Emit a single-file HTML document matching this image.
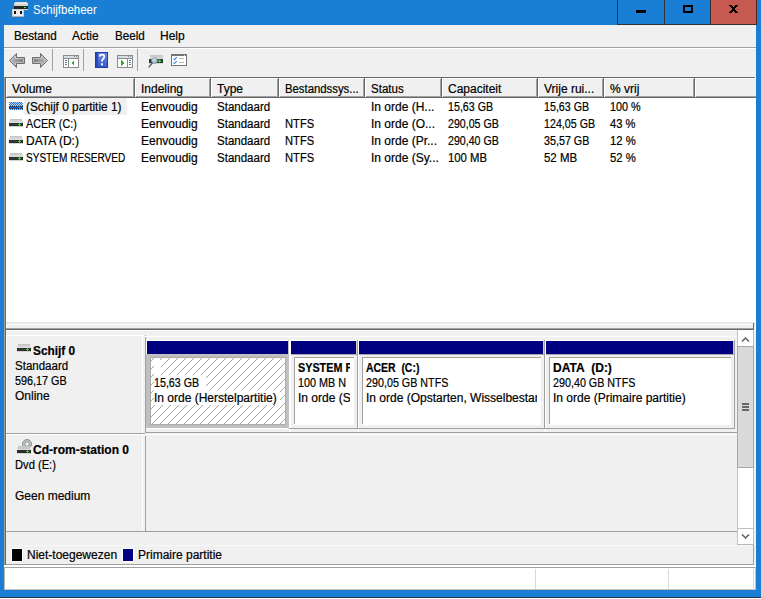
<!DOCTYPE html>
<html><head><meta charset="utf-8">
<style>
*{margin:0;padding:0;box-sizing:border-box}
html,body{width:761px;height:599px;overflow:hidden;background:#fff}
body{position:relative;font-family:"Liberation Sans",sans-serif;font-size:12px;color:#000;-webkit-text-stroke-width:0.2px}
.a{position:absolute}
.t{position:absolute;white-space:nowrap;line-height:15px}
.b{font-weight:bold}
svg{position:absolute;shape-rendering:crispEdges}
svg.s{shape-rendering:auto}
</style></head><body>
<div class="a" style="left:0px;top:0px;width:761px;height:597px;background:#1a7fd4;"></div>
<div class="a" style="left:0px;top:597px;width:761px;height:1px;background:#2a3440;"></div>
<svg style="left:12px;top:2px" width="17" height="16" viewBox="0 0 17 16">
<rect x="3" y="0" width="12" height="1" fill="#e0dcd8"/>
<rect x="2" y="1" width="14" height="3" fill="#d4d4d4"/>
<rect x="2" y="1" width="14" height="1" fill="#e8e8e8"/>
<rect x="2" y="4" width="14" height="3" fill="#262626"/>
<rect x="12" y="5" width="2" height="1" fill="#33ee33"/>
<rect x="2" y="7" width="14" height="1" fill="#d8d4d0"/>
<rect x="0" y="7" width="12" height="8" fill="#d0d0d0"/>
<rect x="1" y="8" width="10" height="6" fill="#ececec"/>
<rect x="2" y="9" width="2" height="3" fill="#151515"/>
<rect x="8" y="9" width="2" height="3" fill="#151515"/>
<rect x="0" y="14" width="12" height="1" fill="#b8aca0"/>
</svg>
<div class="t" style="left:33px;top:3px;transform:scaleX(0.955);transform-origin:0 0;color:#fff;-webkit-text-stroke-width:0">Schijfbeheer</div>
<div class="a" style="left:617px;top:0px;width:1px;height:25px;background:#333;"></div>
<div class="a" style="left:664px;top:0px;width:1px;height:25px;background:#333;"></div>
<div class="a" style="left:710px;top:0px;width:1px;height:25px;background:#333;"></div>
<div class="a" style="left:617px;top:24px;width:140px;height:1px;background:#333;"></div>
<div class="a" style="left:711px;top:0px;width:45px;height:24px;background:#c75a50;"></div>
<div class="a" style="left:756px;top:0px;width:1px;height:25px;background:#4a2a28;"></div>
<div class="a" style="left:636px;top:10px;width:10px;height:3px;background:#000;"></div>
<div class="a" style="left:683px;top:5px;width:10px;height:8px;border:2px solid #000"></div>
<svg style="left:729px;top:5px" width="9" height="8" viewBox="0 0 9 8"><rect x="0" y="0" width="3" height="1" fill="#000"/><rect x="6" y="0" width="3" height="1" fill="#000"/><rect x="1" y="1" width="3" height="1" fill="#000"/><rect x="5" y="1" width="3" height="1" fill="#000"/><rect x="2" y="2" width="5" height="1" fill="#000"/><rect x="3" y="3" width="3" height="1" fill="#000"/><rect x="3" y="4" width="3" height="1" fill="#000"/><rect x="2" y="5" width="5" height="1" fill="#000"/><rect x="1" y="6" width="3" height="1" fill="#000"/><rect x="5" y="6" width="3" height="1" fill="#000"/><rect x="0" y="7" width="3" height="1" fill="#000"/><rect x="6" y="7" width="3" height="1" fill="#000"/></svg>
<div class="a" style="left:4px;top:25px;width:752px;height:565px;background:#f0f0f0;"></div>
<div class="t" style="left:14px;top:29px;transform:scaleX(0.97);transform-origin:0 0;">Bestand</div>
<div class="t" style="left:72px;top:29px;">Actie</div>
<div class="t" style="left:115px;top:29px;transform:scaleX(0.97);transform-origin:0 0;">Beeld</div>
<div class="t" style="left:160px;top:29px;">Help</div>
<div class="a" style="left:4px;top:47px;width:752px;height:1px;background:#a0a0a0;"></div>
<div class="a" style="left:4px;top:48px;width:752px;height:1px;background:#fff;"></div>
<div class="a" style="left:52px;top:49px;width:1px;height:22px;background:#a0a0a0;"></div>
<div class="a" style="left:83px;top:49px;width:1px;height:22px;background:#a0a0a0;"></div>
<div class="a" style="left:137px;top:49px;width:1px;height:22px;background:#a0a0a0;"></div>
<svg class="s" style="left:8px;top:52px" width="18" height="17" viewBox="0 0 18 17"><defs><linearGradient id="ga" x1="0" y1="0" x2="1" y2="0.3"><stop offset="0" stop-color="#c4c4c4"/><stop offset="1" stop-color="#808080"/></linearGradient><linearGradient id="ga2" x1="1" y1="0" x2="0" y2="0.3"><stop offset="0" stop-color="#c4c4c4"/><stop offset="1" stop-color="#808080"/></linearGradient></defs><path d="M1.5 8.5 L8.5 1.5 L8.5 5.5 L16.5 5.5 L16.5 11.5 L8.5 11.5 L8.5 15.5 Z" fill="url(#ga)" stroke="#6e6e6e" stroke-width="1"/><path d="M3 8.5 L7.5 4 L7.5 6.5 L15.5 6.5 L15.5 10.5 L7.5 10.5 L7.5 13 Z" fill="none" stroke="#e4e4e4" stroke-width="0.7" stroke-opacity="0.8"/></svg>
<svg class="s" style="left:31px;top:52px" width="18" height="17" viewBox="0 0 18 17"><path d="M16.5 8.5 L9.5 1.5 L9.5 5.5 L1.5 5.5 L1.5 11.5 L9.5 11.5 L9.5 15.5 Z" fill="url(#ga2)" stroke="#6e6e6e" stroke-width="1"/><path d="M15 8.5 L10.5 4 L10.5 6.5 L2.5 6.5 L2.5 10.5 L10.5 10.5 L10.5 13 Z" fill="none" stroke="#e4e4e4" stroke-width="0.7" stroke-opacity="0.8"/></svg>
<svg style="left:63px;top:55px" width="16" height="13" viewBox="0 0 16 13"><rect x="0" y="0" width="16" height="13" fill="#8a8a8a"/><rect x="1" y="1" width="14" height="11" fill="#fff"/><rect x="1" y="1" width="14" height="2" fill="#d8dde5"/><rect x="11" y="1" width="1" height="1" fill="#8a8a8a"/><rect x="13" y="1" width="1" height="1" fill="#8a8a8a"/><rect x="0" y="3" width="16" height="1" fill="#8a8a8a"/><rect x="5" y="3" width="1" height="10" fill="#8a8a8a"/><rect x="2" y="5" width="2" height="1" fill="#4a7fc0"/><rect x="2" y="7" width="2" height="1" fill="#4a7fc0"/><rect x="2" y="9" width="2" height="1" fill="#4a7fc0"/><path d="M8 8 L11 5 L11 11 Z" fill="#3aaa2a"/></svg>
<svg class="s" style="left:95px;top:52px" width="13" height="16" viewBox="0 0 13 16"><defs><linearGradient id="gh" x1="0" y1="0" x2="0" y2="1"><stop offset="0" stop-color="#6a8ae8"/><stop offset="1" stop-color="#3a58c8"/></linearGradient></defs><rect x="0" y="0" width="13" height="16" fill="#1e3aa8"/><rect x="3" y="1" width="9" height="14" fill="url(#gh)"/><rect x="1" y="1" width="2" height="14" fill="#2a4ab8"/><path d="M4.6 4.6 Q4.8 2.6 7 2.6 Q9.3 2.6 9.3 4.6 Q9.3 6 8 7 Q7 7.8 7 9.6" fill="none" stroke="#fff" stroke-width="1.7"/><rect x="6" y="11.3" width="2" height="2" fill="#fff"/></svg>
<svg style="left:117px;top:55px" width="16" height="13" viewBox="0 0 16 13"><rect x="0" y="0" width="16" height="13" fill="#8a8a8a"/><rect x="1" y="1" width="14" height="11" fill="#fff"/><rect x="1" y="1" width="14" height="2" fill="#d8dde5"/><rect x="11" y="1" width="1" height="1" fill="#8a8a8a"/><rect x="13" y="1" width="1" height="1" fill="#8a8a8a"/><rect x="0" y="3" width="16" height="1" fill="#8a8a8a"/><rect x="10" y="3" width="1" height="10" fill="#8a8a8a"/><rect x="12" y="5" width="2" height="1" fill="#4a7fc0"/><rect x="12" y="7" width="2" height="1" fill="#4a7fc0"/><rect x="12" y="9" width="2" height="1" fill="#4a7fc0"/><path d="M4 5 L7 8 L4 11 Z" fill="#3aaa2a"/></svg>
<svg class="s" style="left:147px;top:53px" width="17" height="16" viewBox="0 0 17 16"><defs><linearGradient id="gd" x1="0" y1="0" x2="0" y2="1"><stop offset="0" stop-color="#c4c4c4"/><stop offset="1" stop-color="#dcdcdc"/></linearGradient><radialGradient id="gl" cx="0.4" cy="0.35" r="0.75"><stop offset="0" stop-color="#e0eaf0"/><stop offset="1" stop-color="#7a98b0"/></radialGradient></defs><rect x="3" y="2" width="13" height="4" fill="url(#gd)"/><rect x="2" y="6" width="14" height="4" fill="#343434"/><rect x="12" y="6.5" width="1.2" height="3" fill="#22ee22"/><rect x="11" y="7.4" width="3.2" height="1.2" fill="#22ee22"/><rect x="2" y="10" width="14" height="1" fill="#d4d4d4"/><line x1="5.6" y1="9.8" x2="1.6" y2="14.4" stroke="#505860" stroke-width="1.3"/><circle cx="7.5" cy="7.6" r="2.9" fill="url(#gl)" stroke="#8aa0b0" stroke-width="0.8"/></svg>
<svg style="left:171px;top:54px" width="16" height="12" viewBox="0 0 16 12"><rect x="0" y="0" width="16" height="12" fill="#747474"/><rect x="1" y="2" width="14" height="9" fill="#fff"/><rect x="13" y="1" width="1" height="1" fill="#d0d0d0"/></svg>
<svg class="s" style="left:171px;top:54px" width="16" height="12" viewBox="0 0 16 12"><path d="M2.5 4.6 L3.6 5.7 L5.8 3.2" stroke="#3a8ae0" stroke-width="1.1" fill="none"/><path d="M2.5 8.4 L3.6 9.5 L5.8 7" stroke="#3a8ae0" stroke-width="1.1" fill="none"/><rect x="8" y="4" width="5" height="1" fill="#b8b8b8"/><rect x="8" y="8" width="5" height="1" fill="#b8b8b8"/></svg>
<div class="a" style="left:4px;top:77px;width:1px;height:253px;background:#a8a098;"></div>
<div class="a" style="left:5px;top:77px;width:1px;height:488px;background:#696969;"></div>
<div class="a" style="left:5px;top:77px;width:750px;height:1px;background:#696969;"></div>
<div class="a" style="left:6px;top:78px;width:749px;height:244px;background:#fff;"></div>
<div class="a" style="left:755px;top:77px;width:1px;height:253px;background:#fff;"></div>
<div class="a" style="left:6px;top:78px;width:129px;height:20px;background:#f0f0f0;"></div>
<div class="a" style="left:6px;top:78px;width:129px;height:1px;background:#fff;"></div>
<div class="a" style="left:6px;top:78px;width:1px;height:20px;background:#fff;"></div>
<div class="a" style="left:6px;top:97px;width:129px;height:1px;background:#696969;"></div>
<div class="a" style="left:7px;top:96px;width:128px;height:1px;background:#a0a0a0;"></div>
<div class="a" style="left:134px;top:78px;width:1px;height:20px;background:#696969;"></div>
<div class="a" style="left:133px;top:79px;width:1px;height:18px;background:#a0a0a0;"></div>
<div class="t" style="left:12px;top:82px;transform:scaleX(1);transform-origin:0 0;">Volume</div>
<div class="a" style="left:135px;top:78px;width:76px;height:20px;background:#f0f0f0;"></div>
<div class="a" style="left:135px;top:78px;width:76px;height:1px;background:#fff;"></div>
<div class="a" style="left:135px;top:78px;width:1px;height:20px;background:#fff;"></div>
<div class="a" style="left:135px;top:97px;width:76px;height:1px;background:#696969;"></div>
<div class="a" style="left:136px;top:96px;width:75px;height:1px;background:#a0a0a0;"></div>
<div class="a" style="left:210px;top:78px;width:1px;height:20px;background:#696969;"></div>
<div class="a" style="left:209px;top:79px;width:1px;height:18px;background:#a0a0a0;"></div>
<div class="t" style="left:141px;top:82px;transform:scaleX(1);transform-origin:0 0;">Indeling</div>
<div class="a" style="left:211px;top:78px;width:68px;height:20px;background:#f0f0f0;"></div>
<div class="a" style="left:211px;top:78px;width:68px;height:1px;background:#fff;"></div>
<div class="a" style="left:211px;top:78px;width:1px;height:20px;background:#fff;"></div>
<div class="a" style="left:211px;top:97px;width:68px;height:1px;background:#696969;"></div>
<div class="a" style="left:212px;top:96px;width:67px;height:1px;background:#a0a0a0;"></div>
<div class="a" style="left:278px;top:78px;width:1px;height:20px;background:#696969;"></div>
<div class="a" style="left:277px;top:79px;width:1px;height:18px;background:#a0a0a0;"></div>
<div class="t" style="left:217px;top:82px;transform:scaleX(1);transform-origin:0 0;">Type</div>
<div class="a" style="left:279px;top:78px;width:86px;height:20px;background:#f0f0f0;"></div>
<div class="a" style="left:279px;top:78px;width:86px;height:1px;background:#fff;"></div>
<div class="a" style="left:279px;top:78px;width:1px;height:20px;background:#fff;"></div>
<div class="a" style="left:279px;top:97px;width:86px;height:1px;background:#696969;"></div>
<div class="a" style="left:280px;top:96px;width:85px;height:1px;background:#a0a0a0;"></div>
<div class="a" style="left:364px;top:78px;width:1px;height:20px;background:#696969;"></div>
<div class="a" style="left:363px;top:79px;width:1px;height:18px;background:#a0a0a0;"></div>
<div class="t" style="left:285px;top:82px;transform:scaleX(0.945);transform-origin:0 0;">Bestandssys...</div>
<div class="a" style="left:365px;top:78px;width:77px;height:20px;background:#f0f0f0;"></div>
<div class="a" style="left:365px;top:78px;width:77px;height:1px;background:#fff;"></div>
<div class="a" style="left:365px;top:78px;width:1px;height:20px;background:#fff;"></div>
<div class="a" style="left:365px;top:97px;width:77px;height:1px;background:#696969;"></div>
<div class="a" style="left:366px;top:96px;width:76px;height:1px;background:#a0a0a0;"></div>
<div class="a" style="left:441px;top:78px;width:1px;height:20px;background:#696969;"></div>
<div class="a" style="left:440px;top:79px;width:1px;height:18px;background:#a0a0a0;"></div>
<div class="t" style="left:371px;top:82px;transform:scaleX(0.96);transform-origin:0 0;">Status</div>
<div class="a" style="left:442px;top:78px;width:96px;height:20px;background:#f0f0f0;"></div>
<div class="a" style="left:442px;top:78px;width:96px;height:1px;background:#fff;"></div>
<div class="a" style="left:442px;top:78px;width:1px;height:20px;background:#fff;"></div>
<div class="a" style="left:442px;top:97px;width:96px;height:1px;background:#696969;"></div>
<div class="a" style="left:443px;top:96px;width:95px;height:1px;background:#a0a0a0;"></div>
<div class="a" style="left:537px;top:78px;width:1px;height:20px;background:#696969;"></div>
<div class="a" style="left:536px;top:79px;width:1px;height:18px;background:#a0a0a0;"></div>
<div class="t" style="left:448px;top:82px;transform:scaleX(1);transform-origin:0 0;">Capaciteit</div>
<div class="a" style="left:538px;top:78px;width:66px;height:20px;background:#f0f0f0;"></div>
<div class="a" style="left:538px;top:78px;width:66px;height:1px;background:#fff;"></div>
<div class="a" style="left:538px;top:78px;width:1px;height:20px;background:#fff;"></div>
<div class="a" style="left:538px;top:97px;width:66px;height:1px;background:#696969;"></div>
<div class="a" style="left:539px;top:96px;width:65px;height:1px;background:#a0a0a0;"></div>
<div class="a" style="left:603px;top:78px;width:1px;height:20px;background:#696969;"></div>
<div class="a" style="left:602px;top:79px;width:1px;height:18px;background:#a0a0a0;"></div>
<div class="t" style="left:544px;top:82px;transform:scaleX(1);transform-origin:0 0;">Vrije rui...</div>
<div class="a" style="left:604px;top:78px;width:91px;height:20px;background:#f0f0f0;"></div>
<div class="a" style="left:604px;top:78px;width:91px;height:1px;background:#fff;"></div>
<div class="a" style="left:604px;top:78px;width:1px;height:20px;background:#fff;"></div>
<div class="a" style="left:604px;top:97px;width:91px;height:1px;background:#696969;"></div>
<div class="a" style="left:605px;top:96px;width:90px;height:1px;background:#a0a0a0;"></div>
<div class="a" style="left:694px;top:78px;width:1px;height:20px;background:#696969;"></div>
<div class="a" style="left:693px;top:79px;width:1px;height:18px;background:#a0a0a0;"></div>
<div class="t" style="left:610px;top:82px;transform:scaleX(1);transform-origin:0 0;">% vrij</div>
<div class="a" style="left:695px;top:78px;width:61px;height:20px;background:#f0f0f0;"></div>
<div class="a" style="left:695px;top:78px;width:61px;height:1px;background:#fff;"></div>
<div class="a" style="left:695px;top:78px;width:1px;height:20px;background:#fff;"></div>
<div class="a" style="left:695px;top:97px;width:61px;height:1px;background:#696969;"></div>
<div class="a" style="left:696px;top:96px;width:60px;height:1px;background:#a0a0a0;"></div>
<div class="a" style="left:24px;top:98px;width:103px;height:17px;background:#f0f0f0;"></div>
<div class="t" style="left:26px;top:100px;transform:scaleX(0.987);transform-origin:0 0;">(Schijf 0 partitie 1)</div>
<div class="t" style="left:141px;top:100px;transform:scaleX(1);transform-origin:0 0;">Eenvoudig</div>
<div class="t" style="left:217px;top:100px;transform:scaleX(0.96);transform-origin:0 0;">Standaard</div>
<div class="t" style="left:371px;top:100px;transform:scaleX(1);transform-origin:0 0;">In orde (H...</div>
<div class="t" style="left:448px;top:100px;transform:scaleX(0.89);transform-origin:0 0;">15,63 GB</div>
<div class="t" style="left:544px;top:100px;transform:scaleX(0.89);transform-origin:0 0;">15,63 GB</div>
<div class="t" style="left:610px;top:100px;transform:scaleX(0.897);transform-origin:0 0;">100 %</div>
<div class="t" style="left:26px;top:117px;transform:scaleX(0.895);transform-origin:0 0;">ACER (C:)</div>
<div class="t" style="left:141px;top:117px;transform:scaleX(1);transform-origin:0 0;">Eenvoudig</div>
<div class="t" style="left:217px;top:117px;transform:scaleX(0.96);transform-origin:0 0;">Standaard</div>
<div class="t" style="left:285px;top:117px;transform:scaleX(0.93);transform-origin:0 0;">NTFS</div>
<div class="t" style="left:371px;top:117px;transform:scaleX(1);transform-origin:0 0;">In orde (O...</div>
<div class="t" style="left:448px;top:117px;transform:scaleX(0.886);transform-origin:0 0;">290,05 GB</div>
<div class="t" style="left:544px;top:117px;transform:scaleX(0.89);transform-origin:0 0;">124,05 GB</div>
<div class="t" style="left:610px;top:117px;transform:scaleX(0.933);transform-origin:0 0;">43 %</div>
<div class="t" style="left:26px;top:134px;transform:scaleX(1);transform-origin:0 0;">DATA (D:)</div>
<div class="t" style="left:141px;top:134px;transform:scaleX(1);transform-origin:0 0;">Eenvoudig</div>
<div class="t" style="left:217px;top:134px;transform:scaleX(0.96);transform-origin:0 0;">Standaard</div>
<div class="t" style="left:285px;top:134px;transform:scaleX(0.93);transform-origin:0 0;">NTFS</div>
<div class="t" style="left:371px;top:134px;transform:scaleX(1);transform-origin:0 0;">In orde (Pr...</div>
<div class="t" style="left:448px;top:134px;transform:scaleX(0.886);transform-origin:0 0;">290,40 GB</div>
<div class="t" style="left:544px;top:134px;transform:scaleX(0.894);transform-origin:0 0;">35,57 GB</div>
<div class="t" style="left:610px;top:134px;transform:scaleX(0.94);transform-origin:0 0;">12 %</div>
<div class="t" style="left:26px;top:151px;transform:scaleX(0.838);transform-origin:0 0;">SYSTEM RESERVED</div>
<div class="t" style="left:141px;top:151px;transform:scaleX(1);transform-origin:0 0;">Eenvoudig</div>
<div class="t" style="left:217px;top:151px;transform:scaleX(0.96);transform-origin:0 0;">Standaard</div>
<div class="t" style="left:285px;top:151px;transform:scaleX(0.93);transform-origin:0 0;">NTFS</div>
<div class="t" style="left:371px;top:151px;transform:scaleX(1);transform-origin:0 0;">In orde (Sy...</div>
<div class="t" style="left:448px;top:151px;transform:scaleX(0.945);transform-origin:0 0;">100 MB</div>
<div class="t" style="left:544px;top:151px;transform:scaleX(0.955);transform-origin:0 0;">52 MB</div>
<div class="t" style="left:610px;top:151px;transform:scaleX(0.94);transform-origin:0 0;">52 %</div>
<svg style="left:9px;top:102px" width="14" height="8" viewBox="0 0 14 8"><rect x="1" y="0" width="12" height="1" fill="#c4c4c4"/><rect x="1" y="1" width="12" height="1" fill="#cfcfcf"/><rect x="1" y="2" width="12" height="1" fill="#d6d6d6"/><rect x="0" y="3" width="14" height="1" fill="#dedede"/><rect x="0" y="2" width="1" height="1" fill="#e0e0e0"/><rect x="13" y="2" width="1" height="1" fill="#e0e0e0"/><rect x="0" y="4" width="14" height="3" fill="#2c2c2c"/><rect x="1" y="5" width="8" height="1" fill="#3c3c3c"/><rect x="10" y="4" width="1" height="3" fill="#22dd22"/><rect x="9" y="5" width="3" height="1" fill="#22dd22"/><rect x="0" y="7" width="14" height="1" fill="#d4d4d4"/><defs><pattern id="ck" width="2" height="2" patternUnits="userSpaceOnUse"><rect width="1" height="1" fill="#1a73e8"/><rect x="1" y="1" width="1" height="1" fill="#1a73e8"/></pattern></defs><rect width="14" height="8" fill="url(#ck)"/></svg>
<svg style="left:9px;top:119px" width="14" height="8" viewBox="0 0 14 8"><rect x="1" y="0" width="12" height="1" fill="#c4c4c4"/><rect x="1" y="1" width="12" height="1" fill="#cfcfcf"/><rect x="1" y="2" width="12" height="1" fill="#d6d6d6"/><rect x="0" y="3" width="14" height="1" fill="#dedede"/><rect x="0" y="2" width="1" height="1" fill="#e0e0e0"/><rect x="13" y="2" width="1" height="1" fill="#e0e0e0"/><rect x="0" y="4" width="14" height="3" fill="#2c2c2c"/><rect x="1" y="5" width="8" height="1" fill="#3c3c3c"/><rect x="10" y="4" width="1" height="3" fill="#22dd22"/><rect x="9" y="5" width="3" height="1" fill="#22dd22"/><rect x="0" y="7" width="14" height="1" fill="#d4d4d4"/></svg>
<svg style="left:9px;top:136px" width="14" height="8" viewBox="0 0 14 8"><rect x="1" y="0" width="12" height="1" fill="#c4c4c4"/><rect x="1" y="1" width="12" height="1" fill="#cfcfcf"/><rect x="1" y="2" width="12" height="1" fill="#d6d6d6"/><rect x="0" y="3" width="14" height="1" fill="#dedede"/><rect x="0" y="2" width="1" height="1" fill="#e0e0e0"/><rect x="13" y="2" width="1" height="1" fill="#e0e0e0"/><rect x="0" y="4" width="14" height="3" fill="#2c2c2c"/><rect x="1" y="5" width="8" height="1" fill="#3c3c3c"/><rect x="10" y="4" width="1" height="3" fill="#22dd22"/><rect x="9" y="5" width="3" height="1" fill="#22dd22"/><rect x="0" y="7" width="14" height="1" fill="#d4d4d4"/></svg>
<svg style="left:9px;top:153px" width="14" height="8" viewBox="0 0 14 8"><rect x="1" y="0" width="12" height="1" fill="#c4c4c4"/><rect x="1" y="1" width="12" height="1" fill="#cfcfcf"/><rect x="1" y="2" width="12" height="1" fill="#d6d6d6"/><rect x="0" y="3" width="14" height="1" fill="#dedede"/><rect x="0" y="2" width="1" height="1" fill="#e0e0e0"/><rect x="13" y="2" width="1" height="1" fill="#e0e0e0"/><rect x="0" y="4" width="14" height="3" fill="#2c2c2c"/><rect x="1" y="5" width="8" height="1" fill="#3c3c3c"/><rect x="10" y="4" width="1" height="3" fill="#22dd22"/><rect x="9" y="5" width="3" height="1" fill="#22dd22"/><rect x="0" y="7" width="14" height="1" fill="#d4d4d4"/></svg>
<div class="a" style="left:6px;top:322px;width:749px;height:2px;background:#e8e8e8;"></div>
<div class="a" style="left:6px;top:324px;width:748px;height:1px;background:#fafafa;"></div>
<div class="a" style="left:6px;top:324px;width:1px;height:4px;background:#fff;"></div>
<div class="a" style="left:6px;top:328px;width:748px;height:1px;background:#a0a0a0;"></div>
<div class="a" style="left:6px;top:329px;width:748px;height:1px;background:#696969;"></div>
<div class="a" style="left:753px;top:323px;width:1px;height:6px;background:#696969;"></div>
<div class="a" style="left:6px;top:330px;width:750px;height:1px;background:#fff;"></div>
<div class="a" style="left:4px;top:330px;width:1px;height:235px;background:#a8a098;"></div>
<div class="a" style="left:6px;top:335px;width:1px;height:98px;background:#fff;"></div>
<div class="a" style="left:6px;top:434px;width:1px;height:97px;background:#fff;"></div>
<div class="a" style="left:6px;top:335px;width:137px;height:1px;background:#fff;"></div>
<div class="a" style="left:142px;top:335px;width:1px;height:98px;background:#fff;"></div>
<div class="a" style="left:143px;top:336px;width:594px;height:1px;background:#fff;"></div>
<div class="a" style="left:6px;top:433px;width:139px;height:1px;background:#a0a0a0;"></div>
<div class="a" style="left:6px;top:434px;width:731px;height:1px;background:#fff;"></div>
<div class="a" style="left:142px;top:435px;width:1px;height:96px;background:#fff;"></div>
<div class="a" style="left:145px;top:335px;width:1px;height:1px;background:#a8a8a8;"></div>
<div class="a" style="left:145px;top:337px;width:1px;height:96px;background:#a0a0a0;"></div>
<div class="a" style="left:145px;top:436px;width:1px;height:96px;background:#a0a0a0;"></div>
<div class="a" style="left:6px;top:531px;width:731px;height:1px;background:#a0a0a0;"></div>
<div class="a" style="left:146px;top:432px;width:591px;height:1px;background:#a0a0a0;"></div>
<div class="a" style="left:146px;top:428px;width:143px;height:1px;background:#fff;"></div>
<svg style="left:17px;top:344px" width="14" height="8" viewBox="0 0 14 8"><rect x="1" y="0" width="12" height="1" fill="#c4c4c4"/><rect x="1" y="1" width="12" height="1" fill="#cfcfcf"/><rect x="1" y="2" width="12" height="1" fill="#d6d6d6"/><rect x="0" y="3" width="14" height="1" fill="#dedede"/><rect x="0" y="2" width="1" height="1" fill="#e0e0e0"/><rect x="13" y="2" width="1" height="1" fill="#e0e0e0"/><rect x="0" y="4" width="14" height="3" fill="#2c2c2c"/><rect x="1" y="5" width="8" height="1" fill="#3c3c3c"/><rect x="10" y="4" width="1" height="3" fill="#22dd22"/><rect x="9" y="5" width="3" height="1" fill="#22dd22"/><rect x="0" y="7" width="14" height="1" fill="#d4d4d4"/></svg>
<div class="t b" style="left:33px;top:344px;transform:scaleX(0.985);transform-origin:0 0">Schijf 0</div>
<div class="t" style="left:15px;top:359px;transform:scaleX(0.96);transform-origin:0 0;">Standaard</div>
<div class="t" style="left:15px;top:374px;transform:scaleX(0.9);transform-origin:0 0;">596,17 GB</div>
<div class="t" style="left:15px;top:389px;">Online</div>
<svg class="s" style="left:17px;top:439px" width="15" height="15" viewBox="0 0 15 15">
<circle cx="10" cy="5" r="4.5" fill="#c0c4c4" stroke="#8a9090" stroke-width="1"/>
<circle cx="10" cy="5" r="2.2" fill="#e8ecec" stroke="#8a9090" stroke-width="0.9"/>
<circle cx="10" cy="5" r="1" fill="#fff"/>
<rect x="1" y="7" width="12" height="3" fill="#c8c8c8"/><rect x="0" y="10" width="14" height="1" fill="#dadada"/>
<rect x="0" y="11" width="14" height="3" fill="#2c2c2c"/>
<rect x="10" y="11" width="1" height="3" fill="#22dd22"/><rect x="9" y="12" width="3" height="1" fill="#22dd22"/>
<rect x="0" y="14" width="14" height="1" fill="#d4d4d4"/>
</svg>
<div class="t b" style="left:33px;top:443px;">Cd-rom-station 0</div>
<div class="t" style="left:15px;top:458px;transform:scaleX(0.93);transform-origin:0 0;">Dvd (E:)</div>
<div class="t" style="left:15px;top:489px;">Geen medium</div>
<div class="a" style="left:146px;top:340px;width:143px;height:1px;background:#fff;"></div>
<div class="a" style="left:146px;top:340px;width:1px;height:14px;background:#fff;"></div>
<div class="a" style="left:147px;top:341px;width:141px;height:13px;background:#000080;"></div>
<div class="a" style="left:288px;top:340px;width:1px;height:14px;background:#c0c0c0;"></div>
<div class="a" style="left:146px;top:354px;width:143px;height:74px;background:#c0c0c0;"></div>
<div class="a" style="left:150px;top:357px;width:136px;height:68px;background:#ababab;"></div>
<svg style="left:151px;top:358px" width="134" height="66"><defs><pattern id="hp" width="8" height="8" patternUnits="userSpaceOnUse"><rect x="0" y="2" width="1" height="1" fill="#a4a4a4"/><rect x="1" y="1" width="1" height="1" fill="#a4a4a4"/><rect x="2" y="0" width="1" height="1" fill="#a4a4a4"/><rect x="3" y="7" width="1" height="1" fill="#a4a4a4"/><rect x="4" y="6" width="1" height="1" fill="#a4a4a4"/><rect x="5" y="5" width="1" height="1" fill="#a4a4a4"/><rect x="6" y="4" width="1" height="1" fill="#a4a4a4"/><rect x="7" y="3" width="1" height="1" fill="#a4a4a4"/></pattern></defs><rect width="134" height="66" fill="#fff"/><rect width="134" height="66" fill="url(#hp)"/></svg>
<div class="a" style="left:154px;top:360px;width:7px;height:15px;background:#fff;"></div>
<div class="a" style="left:154px;top:375px;width:52px;height:15px;background:#fff;"></div>
<div class="a" style="left:154px;top:390px;width:126px;height:15px;background:#fff;"></div>
<div class="t" style="left:154px;top:376px;transform:scaleX(0.89);transform-origin:0 0;">15,63 GB</div>
<div class="t" style="left:154px;top:391px;">In orde (Herstelpartitie)</div>
<div class="a" style="left:289px;top:340px;width:2px;height:92px;background:#fff;"></div>
<div class="a" style="left:291px;top:340px;width:66px;height:1px;background:#fff;"></div>
<div class="a" style="left:291px;top:341px;width:65px;height:13px;background:#000080;"></div>
<div class="a" style="left:356px;top:341px;width:1px;height:13px;background:#d0d0d0;"></div>
<div class="a" style="left:291px;top:354px;width:67px;height:1px;background:#a8a8a8;"></div>
<div class="a" style="left:291px;top:355px;width:66px;height:73px;background:#f0f0f0;"></div>
<div class="a" style="left:357px;top:340px;width:1px;height:89px;background:#a0a0a0;"></div>
<div class="a" style="left:358px;top:340px;width:1px;height:92px;background:#fff;"></div>
<div class="a" style="left:359px;top:340px;width:185px;height:1px;background:#fff;"></div>
<div class="a" style="left:359px;top:341px;width:184px;height:13px;background:#000080;"></div>
<div class="a" style="left:543px;top:341px;width:1px;height:13px;background:#d0d0d0;"></div>
<div class="a" style="left:359px;top:354px;width:186px;height:1px;background:#a8a8a8;"></div>
<div class="a" style="left:359px;top:355px;width:185px;height:73px;background:#f0f0f0;"></div>
<div class="a" style="left:544px;top:340px;width:1px;height:89px;background:#a0a0a0;"></div>
<div class="a" style="left:545px;top:340px;width:1px;height:92px;background:#fff;"></div>
<div class="a" style="left:546px;top:340px;width:188px;height:1px;background:#fff;"></div>
<div class="a" style="left:546px;top:341px;width:187px;height:13px;background:#000080;"></div>
<div class="a" style="left:733px;top:341px;width:1px;height:13px;background:#d0d0d0;"></div>
<div class="a" style="left:546px;top:354px;width:189px;height:1px;background:#a8a8a8;"></div>
<div class="a" style="left:546px;top:355px;width:188px;height:73px;background:#f0f0f0;"></div>
<div class="a" style="left:734px;top:340px;width:1px;height:89px;background:#a0a0a0;"></div>
<div class="a" style="left:289px;top:428px;width:446px;height:1px;background:#a0a0a0;"></div>
<div class="a" style="left:294px;top:357px;width:60px;height:68px;background:#fff;"></div>
<div class="a" style="left:294px;top:357px;width:60px;height:1px;background:#a0a0a0;"></div>
<div class="a" style="left:294px;top:357px;width:1px;height:67px;background:#a0a0a0;"></div>
<div class="a" style="left:298px;top:361px;width:52px;height:60px;overflow:hidden">
<div class="t b" style="left:0px;top:0px;transform:scaleX(0.9);transform-origin:0 0;">SYSTEM F</div>
<div class="t" style="left:0px;top:15px;transform:scaleX(0.9);transform-origin:0 0;">100 MB N</div>
<div class="t" style="left:0px;top:30px;">In orde (Sy</div>
</div>
<div class="a" style="left:362px;top:357px;width:179px;height:68px;background:#fff;"></div>
<div class="a" style="left:362px;top:357px;width:179px;height:1px;background:#a0a0a0;"></div>
<div class="a" style="left:362px;top:357px;width:1px;height:67px;background:#a0a0a0;"></div>
<div class="a" style="left:366px;top:361px;width:171px;height:60px;overflow:hidden">
<div class="t b" style="left:0px;top:0px;transform:scaleX(0.87);transform-origin:0 0;">ACER&nbsp; (C:)</div>
<div class="t" style="left:0px;top:15px;transform:scaleX(0.895);transform-origin:0 0;">290,05 GB NTFS</div>
<div class="t" style="left:0px;top:30px;">In orde (Opstarten, Wisselbestan</div>
</div>
<div class="a" style="left:549px;top:357px;width:182px;height:68px;background:#fff;"></div>
<div class="a" style="left:549px;top:357px;width:182px;height:1px;background:#a0a0a0;"></div>
<div class="a" style="left:549px;top:357px;width:1px;height:67px;background:#a0a0a0;"></div>
<div class="a" style="left:553px;top:361px;width:174px;height:60px;overflow:hidden">
<div class="t b" style="left:0px;top:0px;transform:scaleX(1.0);transform-origin:0 0;">DATA&nbsp; (D:)</div>
<div class="t" style="left:0px;top:15px;transform:scaleX(0.895);transform-origin:0 0;">290,40 GB NTFS</div>
<div class="t" style="left:0px;top:30px;">In orde (Primaire partitie)</div>
</div>
<div class="a" style="left:737px;top:330px;width:1px;height:215px;background:#c4c4c4;"></div>
<div class="a" style="left:738px;top:330px;width:15px;height:215px;background:#fff;"></div>
<div class="a" style="left:753px;top:330px;width:1px;height:215px;background:#c0c0c0;"></div>
<svg class="s" style="left:741px;top:336px" width="9" height="7"><path d="M1 5.5 L4.5 2 L8 5.5" stroke="#606060" stroke-width="1.5" fill="none"/></svg>
<div class="a" style="left:737px;top:346px;width:17px;height:122px;background:#dadada;border:1px solid #a8a8a8"></div>
<div class="a" style="left:742px;top:403px;width:7px;height:2px;background:#686868;"></div>
<div class="a" style="left:742px;top:406px;width:7px;height:2px;background:#686868;"></div>
<div class="a" style="left:742px;top:409px;width:7px;height:2px;background:#686868;"></div>
<div class="a" style="left:737px;top:528px;width:17px;height:1px;background:#c0c0c0;"></div>
<div class="a" style="left:737px;top:544px;width:17px;height:1px;background:#b8b8b8;"></div>
<svg class="s" style="left:741px;top:533px" width="9" height="7"><path d="M1 1.5 L4.5 5 L8 1.5" stroke="#606060" stroke-width="1.5" fill="none"/></svg>
<div class="a" style="left:6px;top:545px;width:748px;height:1px;background:#f8f8f8;"></div>
<div class="a" style="left:6px;top:564px;width:748px;height:1px;background:#a0a0a0;"></div>
<div class="a" style="left:753px;top:545px;width:1px;height:20px;background:#a0a0a0;"></div>
<div class="a" style="left:11px;top:548px;width:12px;height:14px;background:#fff;"></div>
<div class="a" style="left:12px;top:549px;width:10px;height:12px;background:#000;"></div>
<div class="t" style="left:27px;top:548px;">Niet-toegewezen</div>
<div class="a" style="left:122px;top:548px;width:12px;height:14px;background:#fff;"></div>
<div class="a" style="left:123px;top:549px;width:10px;height:12px;background:#000080;"></div>
<div class="t" style="left:138px;top:548px;">Primaire partitie</div>
<div class="a" style="left:4px;top:565px;width:752px;height:2px;background:#fff;"></div>
<div class="a" style="left:4px;top:567px;width:752px;height:1px;background:#a0a0a0;"></div>
<div class="a" style="left:4px;top:568px;width:752px;height:22px;background:#fff;"></div>
<div class="a" style="left:4px;top:567px;width:1px;height:23px;background:#c0b8b0;"></div>
<div class="a" style="left:535px;top:569px;width:1px;height:20px;background:#d8d8d8;"></div>
<div class="a" style="left:668px;top:569px;width:1px;height:20px;background:#d8d8d8;"></div>
<div class="a" style="left:753px;top:569px;width:1px;height:20px;background:#d8d8d8;"></div>
<div class="a" style="left:755px;top:567px;width:1px;height:23px;background:#c8c0b8;"></div>
<div class="a" style="left:4px;top:589px;width:752px;height:1px;background:#c8c0b8;"></div>
</body></html>
